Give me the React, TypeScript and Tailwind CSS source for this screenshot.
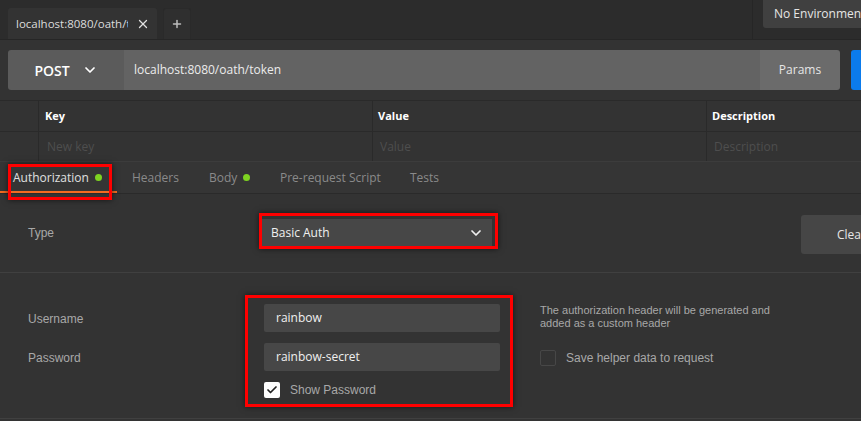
import { ChevronDown, X, Plus, Check } from "lucide-react";

const ui = { fontFamily: '"Open Sans", "Noto Sans", sans-serif' };
const arial = { fontFamily: '"Liberation Sans", Arial, sans-serif' };

const RedBox = ({ className }: { className: string }) => (
  <div
    className={`absolute border-[3px] border-[#ff0000] shadow-[0_0_6px_rgba(0,0,0,0.6)] pointer-events-none ${className}`}
  />
);

export default function App() {
  return (
    <div
      className="relative w-[861px] h-[421px] overflow-hidden bg-[#333333] text-[#e6e6e6]"
      style={ui}
    >
      {/* tab bar */}
      <div className="flex h-[40px] bg-[#2c2c2c] border-b border-[#262626]">
        <div className="flex items-end pl-2 gap-[6px] flex-1">
          <div className="flex items-center w-[149px] h-[31px] bg-[#333333] rounded-t-[3px] pl-[8px] pr-[7px] text-[11.5px] text-[#dcdcdc]">
            <span className="flex-1 overflow-hidden whitespace-nowrap">localhost:8080/oath/token</span>
            <X size={14} strokeWidth={2.2} className="ml-[8px] shrink-0 text-[#e0e0e0]" />
          </div>
          <div className="flex items-center justify-center w-[28px] h-[31px] bg-[#2f2f2f] rounded-t-[3px] border border-b-0 border-[#2a2a2a]">
            <Plus size={12} strokeWidth={3} className="text-[#bdbdbd]" />
          </div>
        </div>
        <div className="w-[1px] bg-[#262626]" />
        <div className="pl-[10px] shrink-0">
          <div className="flex items-center w-[98px] h-[28px] bg-[#404040] rounded-bl-[3px] pl-[11px] text-[12px] text-[#e6e6e6] whitespace-nowrap overflow-hidden">
            No Environment
          </div>
        </div>
      </div>

      {/* url bar */}
      <div className="flex pl-2 pt-[10px] h-[60px]">
        <div className="flex shrink-0 w-[832px] h-[40px] rounded-[3px] overflow-hidden">
          <div className="flex items-center justify-center gap-[12px] w-[116px] bg-[#5b5b5b] text-[14px] font-semibold text-white">
            POST
            <ChevronDown size={16} strokeWidth={2.6} />
          </div>
          <div className="flex items-center flex-1 bg-[#636363] pl-[10px] text-[12px] text-[#ececec]">
            localhost:8080/oath/token
          </div>
          <div className="flex items-center justify-center w-[80px] bg-[#6b6b6b] text-[12px] text-[#e6e6e6]">
            Params
          </div>
        </div>
        <div className="ml-[11px] shrink-0 w-[20px] h-[40px] rounded-l-[3px] bg-[#0b7bec]" />
      </div>

      {/* params table */}
      <div className="border-t border-[#2a2a2a] text-[11px]">
        <div className="flex h-[31px] border-b border-[#2a2a2a]">
          <div className="w-[39px] border-r border-[#2a2a2a]" />
          <div className="flex items-center w-[334px] pl-[6px] font-bold text-white border-r border-[#2a2a2a]">Key</div>
          <div className="flex items-center w-[334px] pl-[5px] font-bold text-white border-r border-[#2a2a2a]">Value</div>
          <div className="flex items-center flex-1 pl-[5px] font-bold text-white">Description</div>
        </div>
        <div className="flex h-[30px] border-b border-[#3c3c3c] text-[12px] text-[#4e4e4e]">
          <div className="w-[39px] border-r border-[#2a2a2a]" />
          <div className="flex items-center w-[334px] pl-[8px] border-r border-[#2a2a2a]">New key</div>
          <div className="flex items-center w-[334px] pl-[7px] border-r border-[#2a2a2a]">Value</div>
          <div className="flex items-center flex-1 pl-[7px]">Description</div>
        </div>
      </div>

      {/* tabs */}
      <div className="flex h-[32px] bg-[#353535] border-b border-[#2a2a2a] text-[12px] text-[#8a8a8a]">
        <div className="relative flex items-center pl-[13px] w-[117px] text-[#e0e0e0]">
          Authorization
          <span className="ml-[6px] w-[7px] h-[7px] rounded-full bg-[#7ed321]" />
          <div className="absolute left-0 right-0 bottom-0 h-[2px] bg-[#f26b21]" />
        </div>
        <div className="flex items-center pl-[15px] w-[92px]">Headers</div>
        <div className="flex items-center w-[71px]">
          Body
          <span className="ml-[6px] w-[7px] h-[7px] rounded-full bg-[#7ed321]" />
        </div>
        <div className="flex items-center w-[130px]">Pre-request Script</div>
        <div className="flex items-center">Tests</div>
      </div>

      {/* type row */}
      <div className="flex items-center h-[79px] border-b border-[#404040]">
        <div className="w-[262px] pl-[28px] text-[12px] text-[#a8a8a8]" style={arial}>Type</div>
        <div className="flex items-center justify-between w-[230px] h-[29px] bg-[#474747] pl-[9px] pr-[8px] text-[12px] text-[#f0f0f0]">
          Basic Auth
          <ChevronDown size={16} strokeWidth={2.6} />
        </div>
        <div className="ml-auto flex items-center w-[60px] h-[39px] mt-[3px] rounded-l-[3px] bg-[#464646] pl-[36px] text-[12px] text-[#e6e6e6] overflow-hidden whitespace-nowrap">
          Clear
        </div>
      </div>

      {/* credentials */}
      <div className="flex pt-[31px] h-[146px] border-b border-[#404040]">
        <div className="flex flex-col w-[264px] pl-[28px] text-[12px] text-[#a8a8a8]" style={arial}>
          <div className="flex items-center h-[28px] pt-[1px]">Username</div>
          <div className="flex items-center h-[28px] mt-[11px] pt-[1px]">Password</div>
        </div>
        <div className="flex flex-col w-[236px]">
          <div className="flex items-center h-[28px] rounded-[2px] bg-[#474747] pl-[12px] text-[12px] text-[#f0f0f0]">
            rainbow
          </div>
          <div className="flex items-center h-[28px] mt-[11px] rounded-[2px] bg-[#474747] pl-[12px] text-[12px] text-[#f0f0f0]">
            rainbow-secret
          </div>
          <div className="flex items-center mt-[11px] h-[16px]">
            <div className="flex items-center justify-center w-[16px] h-[16px] rounded-[2px] bg-white">
              <Check size={12} strokeWidth={3.5} className="text-[#222]" />
            </div>
            <span className="ml-[10px] text-[12px] text-[#a8a8a8]" style={arial}>Show Password</span>
          </div>
        </div>
        <div className="flex flex-col pl-[40px]" style={arial}>
          <div className="text-[11px] leading-[13px] text-[#a8a8a8] w-[250px]">
            The authorization header will be generated and added as a custom header
          </div>
          <div className="flex items-center mt-[19px]">
            <div className="w-[16px] h-[16px] rounded-[2px] border border-[#474747]" />
            <span className="ml-[10px] text-[12px] text-[#a8a8a8]">Save helper data to request</span>
          </div>
        </div>
      </div>

      <RedBox className="left-[8px] top-[164px] w-[104px] h-[36px]" />
      <RedBox className="left-[259px] top-[213px] w-[239px] h-[36px]" />
      <RedBox className="left-[245px] top-[295px] w-[268px] h-[112px]" />
    </div>
  );
}
